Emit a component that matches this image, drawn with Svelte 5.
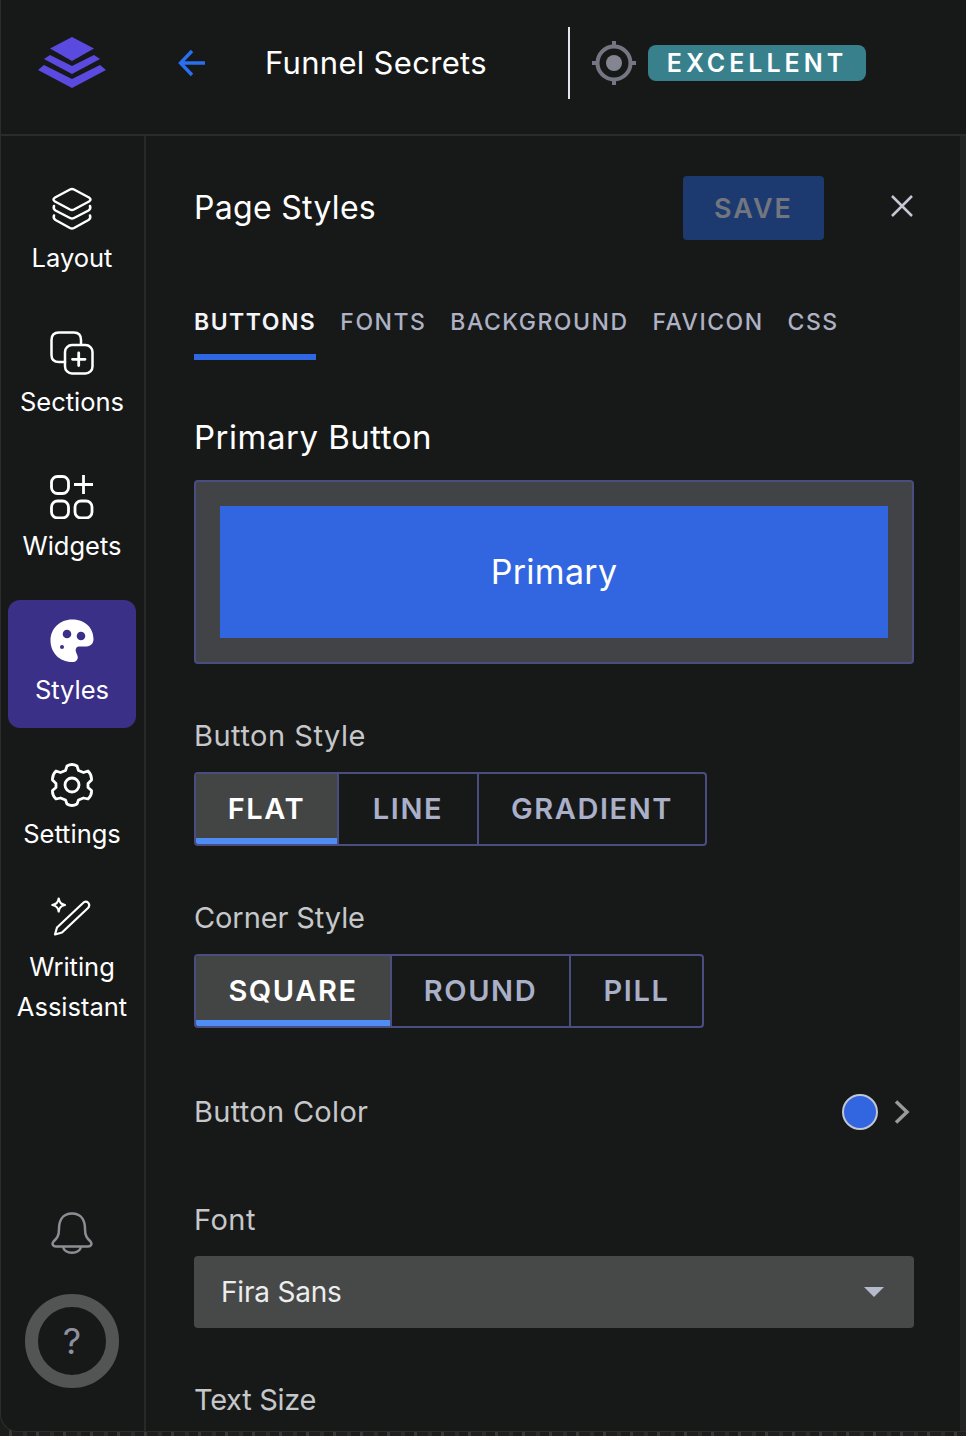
<script>
	const tabs = ['BUTTONS', 'FONTS', 'BACKGROUND', 'FAVICON', 'CSS'];
	const buttonStyles = [
		{ label: 'FLAT', width: 141 },
		{ label: 'LINE', width: 140 },
		{ label: 'GRADIENT', width: 228 }
	];
	const cornerStyles = [
		{ label: 'SQUARE', width: 194 },
		{ label: 'ROUND', width: 179 },
		{ label: 'PILL', width: 133 }
	];
</script>

<div class="window">
	<header class="topbar">
		<svg class="logo" width="68" height="52" viewBox="38 37 68 52" fill="#5b4ae0">
			<path d="M72 37L94 48.500L72 61L50 48.500Z" />
			<path d="M44 59L50 55L72 66L94 55L100 59L72 74Z" />
			<path d="M38 70L44 65L72 79L100 65L106 70L72 88Z" />
		</svg>
		<svg class="back" width="28" height="28" viewBox="0 0 28 28" fill="none" stroke="#2870f0" stroke-width="3.400">
			<path d="M27 14H3M14 2L2.500 14L14 26" />
		</svg>
		<h1>Funnel Secrets</h1>
		<div class="divider"></div>
		<svg class="target" width="44" height="44" viewBox="0 0 44 44" fill="none" stroke="#747782" stroke-width="4">
			<circle cx="22" cy="22" r="16.500" />
			<circle cx="22" cy="22" r="8" fill="#838691" stroke="none" />
			<path d="M22 0V6M22 38V44M0 22H6M38 22H44" />
		</svg>
		<span class="badge">EXCELLENT</span>
	</header>

	<div class="body">
		<nav class="sidebar">
			<div class="nav-item">
				<svg width="44" height="44" viewBox="0 0 44 44" fill="none" stroke="#fff" stroke-width="2.500" stroke-linejoin="round" stroke-linecap="round">
					<path d="M20 2.500Q22 1.500 24 2.500L39 10.500Q42 12.500 39 14.500L24 22.500Q22 23.500 20 22.500L5 14.500Q2 12.500 5 10.500Z" />
					<path d="M4 19Q3 22 5.500 23.500L20 31Q22 32 24 31L38.500 23.500Q41 22 40 19" />
					<path d="M4 28.500Q3 31.500 5.500 33L20 41Q22 42 24 41L38.500 33Q41 31.500 40 28.500" />
				</svg>
				<span>Layout</span>
			</div>
			<div class="nav-item">
				<svg width="44" height="44" viewBox="0 0 44 44" fill="none" stroke="#fff" stroke-width="2.500" stroke-linecap="round">
					<path d="M31 13V9Q31 1.500 24 1.500H9Q1.500 1.500 1.500 9V24Q1.500 31 9 31H15" />
					<rect x="15" y="14" width="27.500" height="28.500" rx="7" />
					<path d="M28.700 22V34.500M22.500 28.300H35" stroke-width="2.800" />
				</svg>
				<span>Sections</span>
			</div>
			<div class="nav-item">
				<svg width="44" height="44" viewBox="0 0 44 44" fill="none" stroke="#fff" stroke-width="2.800">
					<rect x="1.500" y="1.500" width="17" height="17" rx="6" />
					<rect x="1.500" y="26" width="17" height="17" rx="6" />
					<rect x="25" y="26" width="17" height="17" rx="6" />
					<path d="M33.500 0V19M24 9.500H43" />
				</svg>
				<span>Widgets</span>
			</div>
			<div class="nav-item active">
				<svg width="44" height="44" viewBox="0 0 44 44">
					<path fill="#fff" fill-rule="evenodd" d="M22 0.500C34 0.500 43.500 8 43.500 20C43.500 24.500 41 27 36.500 27.500H30C26.500 27.500 25 29.500 26 33C27 36 28.500 37.500 27.500 40C26.500 42.500 24.500 43 22 43C9.500 43 0.500 33.500 0.500 21.500C0.500 9.500 10 0.500 22 0.500ZM17 10.700A4.300 4.300 0 1 0 17.001 19.300A4.300 4.300 0 0 0 17 10.700ZM31 12.700A4.300 4.300 0 1 0 31.001 21.300A4.300 4.300 0 0 0 31 12.700ZM12 26A2 2 0 1 0 12.001 30A2 2 0 0 0 12 26Z" />
				</svg>
				<span>Styles</span>
			</div>
			<div class="nav-item">
				<svg width="44" height="44" viewBox="0 0 44 44" fill="none" stroke="#fff" stroke-width="2.800" stroke-linejoin="round">
					<path d="M17 3Q22 0 27 3L28.500 7.500L33.500 9.500L38 8Q42 12 41.500 17L38 20.500V24.500L41.500 27.500Q42 32.500 38 36L33.500 35L28.500 37L27 41Q22 44 17 41L15.500 37L10.500 35L6 36Q2 32.500 2.500 27.500L6 24.500V20.500L2.500 17Q2 12 6 8L10.500 9.500L15.500 7.500Z" />
					<circle cx="22" cy="22" r="7" />
				</svg>
				<span>Settings</span>
			</div>
			<div class="nav-item writing">
				<svg width="44" height="44" viewBox="0 0 44 44" fill="none" stroke="#fff" stroke-width="2.200" stroke-linejoin="round">
					<path d="M8.700 2.500C9.200 6.500 10.700 8 15 9C10.700 10 9.200 11.500 8.700 15.500C8.200 11.500 6.700 10 2.300 9C6.700 8 8.200 6.500 8.700 2.500Z" />
					<path d="M32.500 7.500Q35.500 4.500 38 6.500Q40.500 9 38 12L12 36.500L5 38.500L7 31.500Z" />
				</svg>
				<span>Writing Assistant</span>
			</div>

			<div class="sidebar-bottom">
				<svg width="42" height="44" viewBox="0 0 42 44" fill="none" stroke="#8d8e91" stroke-width="2.500">
					<path d="M21 1.500C10.500 1.500 8 10 8 17C8 24 6 26 2.500 29.500C0.500 32 2 34.500 5 34.500H37C40 34.500 41.500 32 39.500 29.500C36 26 34 24 34 17C34 10 31.500 1.500 21 1.500Z" />
					<path d="M12 35C14 42.500 28 42.500 30 35" />
				</svg>
				<div class="help">?</div>
			</div>
		</nav>

		<main class="panel">
			<div class="panel-head">
				<h2>Page Styles</h2>
				<button class="save">SAVE</button>
				<svg class="close" width="22" height="22" viewBox="0 0 22 22" stroke="#c3c7d6" stroke-width="2.500">
					<path d="M1 1L21 21M21 1L1 21" />
				</svg>
			</div>

			<div class="tabs">
				{#each tabs as tab, i}
					<div class="tab" class:current={i === 0}>{tab}</div>
				{/each}
			</div>

			<h3>Primary Button</h3>
			<div class="preview">
				<div class="preview-btn">Primary</div>
			</div>

			<div class="label style-label">Button Style</div>
			<div class="segments">
				{#each buttonStyles as s, i}
					<div class="segment" class:on={i === 0} style="width: {s.width}px">{s.label}</div>
				{/each}
			</div>

			<div class="label corner-label">Corner Style</div>
			<div class="segments">
				{#each cornerStyles as s, i}
					<div class="segment" class:on={i === 0} style="width: {s.width}px">{s.label}</div>
				{/each}
			</div>

			<div class="color-row">
				<div class="label">Button Color</div>
				<div class="swatch"></div>
				<svg width="16" height="24" viewBox="0 0 16 24" fill="none" stroke="#9a9a9a" stroke-width="3.500">
					<path d="M2 1.500L13 12L2 22.500" />
				</svg>
			</div>

			<div class="label font-label">Font</div>
			<div class="select">
				<span>Fira Sans</span>
				<div class="caret"></div>
			</div>

			<div class="label size-label">Text Size</div>
		</main>
		<div class="rail"></div>
	</div>
</div>

<style>
	:global(body) {
		margin: 0;
		background: repeating-linear-gradient(90deg, #1b1d1a 0 9px, #383a36 9px 12px, #1e201d 12px 23px, #2b2d28 23px 27px);
	}

	.window {
		width: 966px;
		height: 1432px;
		box-sizing: border-box;
		background: #171919;
		color: #fff;
		font-family: Inter, "Liberation Sans", sans-serif;
		border-left: 1px solid #2b2d2d;
		border-bottom: 1px solid #2b2d2d;
		border-bottom-left-radius: 18px;
		overflow: hidden;
		display: flex;
		flex-direction: column;
	}

	.topbar {
		height: 136px;
		flex: none;
		box-sizing: border-box;
		border-bottom: 2px solid #2a2c2c;
		display: flex;
		align-items: center;
		padding-bottom: 8px;
	}

	.logo {
		margin-left: 37px;
	}

	.back {
		margin-left: 72px;
	}

	h1 {
		margin: -2px 0 0 59px;
		width: 303px;
		font-size: 31px;
		font-weight: 400;
		letter-spacing: 0.3px;
		white-space: nowrap;
	}

	.divider {
		width: 2px;
		height: 72px;
		background: #e4e4ea;
	}

	.target {
		margin-left: 22px;
	}

	.badge {
		margin-left: 12px;
		width: 218px;
		height: 36px;
		box-sizing: border-box;
		background: #37808c;
		border-radius: 8px;
		font-size: 25px;
		font-weight: 600;
		letter-spacing: 4px;
		line-height: 36px;
		text-align: center;
	}

	.body {
		flex: 1;
		display: flex;
		min-height: 0;
	}

	.sidebar {
		width: 145px;
		flex: none;
		box-sizing: border-box;
		border-right: 2px solid #272929;
		padding: 32px 8px 43px 7px;
		display: flex;
		flex-direction: column;
		gap: 16px;
	}

	.nav-item {
		height: 128px;
		flex: none;
		box-sizing: border-box;
		padding-top: 19px;
		border-radius: 12px;
		display: flex;
		flex-direction: column;
		align-items: center;
		font-size: 25.500px;
		line-height: 40px;
		text-align: center;
	}

	.nav-item svg {
		flex: none;
	}

	.nav-item span {
		margin-top: 7px;
	}

	.nav-item.writing {
		padding-top: 8px;
	}

	.nav-item.active {
		background: #3a3088;
	}

	.sidebar-bottom {
		margin-top: auto;
		display: flex;
		flex-direction: column;
		align-items: center;
		gap: 38px;
	}

	.help {
		width: 94px;
		height: 94px;
		box-sizing: border-box;
		border: 13px solid #535555;
		border-radius: 50%;
		color: #8e90a0;
		font-size: 36px;
		line-height: 68px;
		text-align: center;
	}

	.panel {
		flex: 1;
		padding: 40px 46px 0 48px;
		min-width: 0;
	}

	.panel-head {
		display: flex;
		align-items: center;
		height: 64px;
	}

	h2 {
		margin: -2px 0 0;
		font-size: 32px;
		font-weight: 400;
		letter-spacing: 0.3px;
		flex: 1;
	}

	.save {
		width: 141px;
		height: 64px;
		border: none;
		border-radius: 4px;
		background: #1c3a70;
		color: #71767f;
		font: 600 27px Inter, "Liberation Sans", sans-serif;
		letter-spacing: 2px;
	}

	.close {
		margin: -4px 1px 0 67px;
	}

	.tabs {
		display: flex;
		gap: 24px;
		margin-top: 50px;
		height: 70px;
		box-sizing: border-box;
	}

	.tab {
		height: 70px;
		box-sizing: border-box;
		padding-top: 16px;
		font-size: 23px;
		line-height: 32px;
		font-weight: 500;
		letter-spacing: 1.500px;
		color: #aeb2c4;
	}

	.tab.current {
		color: #f4f5fa;
		font-weight: 600;
		border-bottom: 6px solid #2f66e4;
	}

	h3 {
		margin: 55px 0 0;
		font-size: 33px;
		line-height: 44px;
		font-weight: 400;
		letter-spacing: 0.5px;
	}

	.preview {
		margin-top: 21px;
		box-sizing: border-box;
		height: 184px;
		padding: 24px;
		background: #414347;
		border: 2px solid #4a4d80;
		border-radius: 4px;
	}

	.preview-btn {
		height: 132px;
		background: #3166e0;
		font-size: 34px;
		line-height: 132px;
		text-align: center;
		letter-spacing: 0.3px;
	}

	.label {
		font-size: 29px;
		line-height: 40px;
		color: #c6c7c9;
		letter-spacing: 0.3px;
	}

	.style-label {
		margin-top: 52px;
		letter-spacing: 0.5px;
	}

	.corner-label {
		margin-top: 52px;
		letter-spacing: -0.1px;
	}

	.segments {
		margin-top: 16px;
		display: inline-flex;
		vertical-align: top;
		height: 74px;
		box-sizing: border-box;
		border: 2px solid #4a4d80;
		border-radius: 4px;
		overflow: hidden;
	}

	.segment {
		box-sizing: border-box;
		border-left: 2px solid #4a4d80;
		font-size: 29px;
		font-weight: 600;
		letter-spacing: 1.600px;
		line-height: 70px;
		text-align: center;
		color: #aab0c8;
	}

	.segment:first-child {
		border-left: none;
	}

	.segment.on {
		background: #434545;
		color: #fff;
		box-shadow: inset 0 -6px 0 #4f8df5;
	}

	.color-row {
		margin-top: 64px;
		display: flex;
		align-items: center;
		height: 40px;
	}

	.color-row .label {
		flex: 1;
	}

	.swatch {
		width: 36px;
		height: 36px;
		box-sizing: border-box;
		background: #3166e0;
		border: 2px solid #c2c5d2;
		border-radius: 50%;
		margin-right: 16px;
	}

	.color-row svg {
		margin-right: 4px;
	}

	.font-label {
		margin-top: 68px;
		letter-spacing: 0.5px;
	}

	.select {
		margin-top: 16px;
		height: 72px;
		background: #474848;
		border-radius: 4px;
		padding: 0 30px 0 27px;
		display: flex;
		align-items: center;
		justify-content: space-between;
		font-size: 28px;
		color: #eceded;
		letter-spacing: -0.2px;
	}

	.caret {
		width: 0;
		height: 0;
		border-left: 10px solid transparent;
		border-right: 10px solid transparent;
		border-top: 10px solid #b6bacd;
	}

	.size-label {
		margin-top: 52px;
		letter-spacing: -0.3px;
	}

	.rail {
		width: 6px;
		flex: none;
		background: #232525;
	}
</style>
